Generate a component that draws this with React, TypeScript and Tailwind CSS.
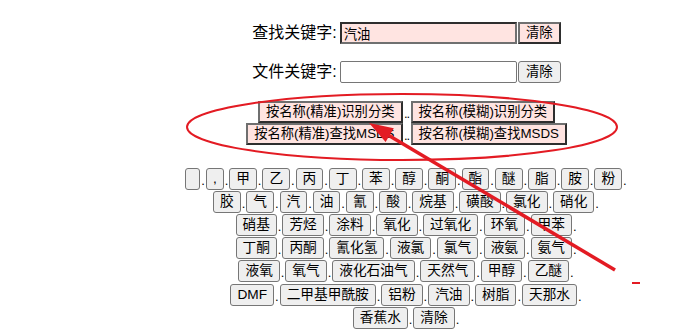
import React from 'react';

const rows: string[][] = [
  ['', ',', '甲', '乙', '丙', '丁', '苯', '醇', '酮', '酯', '醚', '脂', '胺', '粉'],
  ['胶', '气', '汽', '油', '氰', '酸', '烷基', '磺酸', '氯化', '硝化'],
  ['硝基', '芳烃', '涂料', '氧化', '过氧化', '环氧', '甲苯'],
  ['丁酮', '丙酮', '氰化氢', '液氯', '氯气', '液氨', '氨气'],
  ['液氧', '氧气', '液化石油气', '天然气', '甲醇', '乙醚'],
  ['DMF', '二甲基甲酰胺', '铝粉', '汽油', '树脂', '天那水'],
  ['香蕉水', '清除'],
];

const Dot: React.FC = () => (
  <span className="w-[5.5px] h-[22px] text-center text-[13px] leading-[25px]">.</span>
);

const KeyButton: React.FC<{ label: string }> = ({ label }) => (
  <button className="h-[22px] min-w-[15px] px-[6px] text-[13.7px] leading-none bg-[#efefef] border border-[#767676] rounded-[3px] text-black">
    {label}
  </button>
);

const PinkButton: React.FC<{ label: string }> = ({ label }) => (
  <button className="h-[22px] px-[6px] text-[13.3px] leading-none bg-[#ffe4e1] border-2 border-t-[#6f6f6f] border-l-[#6f6f6f] border-b-[#2e2e2e] border-r-[#2e2e2e] text-black">
    {label}
  </button>
);

const App: React.FC = () => {
  return (
    <div className="relative w-[673px] h-[333px] bg-white text-black font-['Liberation_Sans','Noto_Sans_CJK_SC',sans-serif] overflow-hidden">
      <div className="pl-[140px] pt-[22px] flex flex-col items-center">
        {/* search fields */}
        <div className="flex items-center h-[22px]">
          <span className="text-[16px] mr-[3px]">查找关键字:</span>
          <input
            readOnly
            value="汽油"
            className="w-[177px] h-[22px] px-[2px] text-[13.33px] bg-[#ffe4e1] border-2 border-t-[#2e2e2e] border-l-[#2e2e2e] border-b-[#707070] border-r-[#707070] outline-none"
          />
          <button className="w-[43px] h-[22px] ml-[1px] text-[13.33px] leading-none bg-[#ffe4e1] border-2 border-t-[#707070] border-l-[#707070] border-b-[#2e2e2e] border-r-[#2e2e2e]">
            清除
          </button>
        </div>
        <div className="flex items-center h-[22px] mt-[17px]">
          <span className="text-[16px] mr-[3px]">文件关键字:</span>
          <input
            readOnly
            value=""
            className="w-[177px] h-[22px] px-[2px] text-[13.33px] bg-white border border-[#767676] rounded-[2px] outline-none"
          />
          <button className="w-[43px] h-[22px] ml-[1px] text-[13.33px] leading-none bg-[#efefef] border border-[#767676] rounded-[3px]">
            清除
          </button>
        </div>

        {/* name lookup buttons */}
        <div className="flex flex-col items-center mt-[18px]">
          <div className="flex items-center h-[22px]">
            <PinkButton label="按名称(精准)识别分类" />
            <span className="w-[8px] h-[22px] text-[13px] leading-[25px] text-center tracking-[-1px]">..</span>
            <PinkButton label="按名称(模糊)识别分类" />
          </div>
          <div className="flex items-center h-[22px]">
            <PinkButton label="按名称(精准)查找MSDS" />
            <span className="w-[8px] h-[22px] text-[13px] leading-[25px] text-center tracking-[-1px]">..</span>
            <PinkButton label="按名称(模糊)查找MSDS" />
          </div>
        </div>

        {/* quick keys */}
        <div className="flex flex-col items-center mt-[22px]">
          {rows.map((row, i) => (
            <div key={i} className="flex items-center justify-center h-[23.2px]">
              {row.map((label, j) => (
                <React.Fragment key={j}>
                  <KeyButton label={label} />
                  <Dot />
                </React.Fragment>
              ))}
            </div>
          ))}
        </div>
      </div>

      {/* red annotation */}
      <svg className="absolute inset-0 pointer-events-none" width="673" height="333" viewBox="0 0 673 333">
        <ellipse cx="402" cy="127" rx="215" ry="33" fill="none" stroke="#e31b23" strokeWidth="2" />
        <line x1="388" y1="135" x2="615" y2="270" stroke="#e31b23" strokeWidth="3.5" />
        <polygon points="369,123 385.6,142 393.8,128.2" fill="#e31b23" />
        <line x1="632" y1="283" x2="640" y2="283" stroke="#e31b23" strokeWidth="2" />
      </svg>
    </div>
  );
};

export default App;
